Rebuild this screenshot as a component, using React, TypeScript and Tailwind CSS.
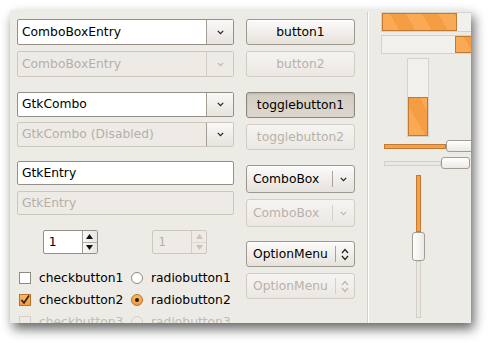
import React from "react";

const entryBox = "border border-[#958f86] rounded-[2px] bg-white";
const entryBoxOff = "border border-[#cdc7bf] rounded-[2px] bg-[#eeebe7]";
const btnOn =
  "border border-[#9d978e] rounded-[3px] bg-[linear-gradient(180deg,#fcfbfa,#e6e2dc)] shadow-[inset_0_1px_0_#ffffff]";
const btnOff =
  "border border-[#d2ccc4] rounded-[3px] bg-[linear-gradient(180deg,#f6f4f2,#ebe8e3)] text-[#b8b2aa]";

function Chevron({ dim = false }: { dim?: boolean }) {
  return (
    <svg width="7" height="5" viewBox="0 0 7 5">
      <path d="M0.8 0.8 L3.5 3.6 L6.2 0.8" fill="none" stroke={dim ? "#bdb7af" : "#222"} strokeWidth="1.2" />
    </svg>
  );
}

function UpDown({ dim = false }: { dim?: boolean }) {
  const c = dim ? "#bdb7af" : "#222";
  return (
    <svg width="8" height="13" viewBox="0 0 8 13">
      <path d="M1 5 L4 1.5 L7 5" fill="none" stroke={c} strokeWidth="1.2" />
      <path d="M1 8 L4 11.5 L7 8" fill="none" stroke={c} strokeWidth="1.2" />
    </svg>
  );
}

function ComboEntry({
  text,
  disabled = false,
  arrowDim,
  h = "h-[26px]",
}: {
  text: string;
  disabled?: boolean;
  arrowDim?: boolean;
  h?: string;
}) {
  const dim = arrowDim ?? disabled;
  return (
    <div className={`flex ${h} ${disabled ? entryBoxOff : entryBox}`}>
      <div className={`flex-1 flex items-center pl-[4px] ${disabled ? "text-[#b5afa7]" : "text-black"}`}>{text}</div>
      <div
        className={`w-[27px] flex items-center justify-center border-l ${
          dim
            ? "border-[#d3cdc5] bg-[#eeebe7]"
            : "border-[#a39d94] bg-[linear-gradient(180deg,#faf9f8,#e7e3de)]"
        }`}
      >
        <Chevron dim={dim} />
      </div>
    </div>
  );
}

function Spin({ disabled = false }: { disabled?: boolean }) {
  const c = disabled ? "#c9c3bb" : "#111";
  return (
    <div className={`flex w-[55px] h-[24px] ${disabled ? entryBoxOff : entryBox}`}>
      <div className={`flex-1 flex items-center pl-[5px] ${disabled ? "text-[#b5afa7]" : ""}`}>1</div>
      <div
        className={`w-[15px] flex flex-col border-l ${
          disabled ? "border-[#d3cdc5]" : "border-[#a39d94] bg-[linear-gradient(90deg,#fbfaf9,#e9e5e0)]"
        }`}
      >
        <div className="flex-1 flex items-center justify-center">
          <svg width="7" height="5" viewBox="0 0 7 5">
            <path d="M0 5 L3.5 0 L7 5 Z" fill={c} />
          </svg>
        </div>
        <div className={`h-px ${disabled ? "bg-[#ddd8d1]" : "bg-[#b5afa6]"}`} />
        <div className="flex-1 flex items-center justify-center">
          <svg width="7" height="5" viewBox="0 0 7 5">
            <path d="M0 0 L3.5 5 L7 0 Z" fill={c} />
          </svg>
        </div>
      </div>
    </div>
  );
}

function Check({ checked = false, disabled = false }: { checked?: boolean; disabled?: boolean }) {
  return (
    <div
      className={`w-[12px] h-[12px] border flex items-center justify-center ${
        checked
          ? "border-[#b7712b] bg-[linear-gradient(180deg,#fbb664,#f39b3f)]"
          : disabled
          ? "border-[#d6d0c8] bg-[#eeebe7]"
          : "border-[#8f897f] bg-white"
      }`}
    >
      {checked && (
        <svg width="10" height="10" viewBox="0 0 10 10">
          <path d="M1.5 5 L4 8 L9 0.5" fill="none" stroke="#2a1e12" strokeWidth="1.6" />
        </svg>
      )}
    </div>
  );
}

function Radio({ checked = false, disabled = false }: { checked?: boolean; disabled?: boolean }) {
  return (
    <div
      className={`w-[12px] h-[12px] rounded-full border flex items-center justify-center ${
        checked
          ? "border-[#b7712b] bg-[linear-gradient(180deg,#fbb664,#f39b3f)]"
          : disabled
          ? "border-[#d6d0c8] bg-[#eeebe7]"
          : "border-[#8f897f] bg-white"
      }`}
    >
      {checked && <div className="w-[4px] h-[4px] rounded-full bg-[#2a1e12]" />}
    </div>
  );
}

function Button({
  label,
  disabled = false,
  pressed = false,
  className = "",
}: {
  label: string;
  disabled?: boolean;
  pressed?: boolean;
  className?: string;
}) {
  const cls = disabled
    ? btnOff
    : pressed
    ? "border border-[#8c857c] rounded-[3px] bg-[linear-gradient(180deg,#d3ccc3,#ddd7cf)] shadow-[inset_0_1px_2px_rgba(0,0,0,0.12)]"
    : btnOn;
  return <div className={`h-[26px] shrink-0 flex items-center justify-center ${cls} ${className}`}>{label}</div>;
}

function MenuButton({
  label,
  disabled = false,
  updown = false,
  h,
}: {
  label: string;
  disabled?: boolean;
  updown?: boolean;
  h: string;
}) {
  return (
    <div className={`${h} flex items-center ${disabled ? btnOff : btnOn}`}>
      <div className="flex-1 pl-[6px]">{label}</div>
      <div className={`w-px h-[16px] ${disabled ? "bg-[#d6d0c8]" : "bg-[#a8a299]"}`} />
      <div className={`${updown ? "w-[18px]" : "w-[21px]"} flex justify-center`}>
        {updown ? <UpDown dim={disabled} /> : <Chevron dim={disabled} />}
      </div>
    </div>
  );
}

const orange =
  "border border-[#c27a33] bg-[repeating-linear-gradient(60deg,#faaa55_0px,#faaa55_14px,#f49d43_14px,#f49d43_28px)]";
const slider =
  "border border-[#a29c93] rounded-[3px] bg-[linear-gradient(180deg,#ffffff,#ece9e5)]";

export default function App() {
  return (
    <div className="min-h-screen bg-white pl-[10px] pt-[10px] font-['DejaVu_Sans',sans-serif] text-[12.3px] text-black leading-none">
      <div className="w-[461px] h-[313px] overflow-hidden bg-[#edebe6] rounded-tl-[2px] shadow-[3px_6px_12px_rgba(0,0,0,0.6)] flex items-start">
        {/* left column */}
        <div className="w-[217px] ml-[7px] mt-[9px] flex flex-col shrink-0">
          <ComboEntry text="ComboBoxEntry" />
          <div className="mt-[6px]">
            <ComboEntry text="ComboBoxEntry" disabled />
          </div>
          <div className="mt-[15px]">
            <ComboEntry text="GtkCombo" h="h-[25px]" />
          </div>
          <div className="mt-[5px]">
            <ComboEntry text="GtkCombo (Disabled)" disabled arrowDim={false} h="h-[25px]" />
          </div>
          <div className={`mt-[14px] h-[24px] flex items-center pl-[4px] ${entryBox}`}>GtkEntry</div>
          <div className={`mt-[6px] h-[24px] flex items-center pl-[4px] text-[#b5afa7] ${entryBoxOff}`}>GtkEntry</div>
          <div className="mt-[15px] grid grid-cols-2">
            <div className="flex justify-center pr-[2px]">
              <Spin />
            </div>
            <div className="flex justify-center">
              <Spin disabled />
            </div>
          </div>
          <div className="mt-[18px] grid grid-cols-[112px_1fr] gap-y-[10px] pl-[2px]">
            <div className="flex items-center gap-[8px] h-[12px]">
              <Check />
              <span>checkbutton1</span>
            </div>
            <div className="flex items-center gap-[8px] h-[12px]">
              <Radio />
              <span>radiobutton1</span>
            </div>
            <div className="flex items-center gap-[8px] h-[12px]">
              <Check checked />
              <span>checkbutton2</span>
            </div>
            <div className="flex items-center gap-[8px] h-[12px]">
              <Radio checked />
              <span>radiobutton2</span>
            </div>
            <div className="flex items-center gap-[8px] h-[12px] text-[#c2bcb4]">
              <Check disabled />
              <span>checkbutton3</span>
            </div>
            <div className="flex items-center gap-[8px] h-[12px] text-[#c2bcb4]">
              <Radio disabled />
              <span>radiobutton3</span>
            </div>
          </div>
        </div>

        {/* middle column */}
        <div className="w-[109px] ml-[12px] mt-[9px] flex flex-col shrink-0">
          <Button label="button1" />
          <Button label="button2" disabled className="mt-[6px]" />
          <Button label="togglebutton1" pressed className="mt-[15px]" />
          <Button label="togglebutton2" disabled className="mt-[6px]" />
          <div className="mt-[15px]">
            <MenuButton label="ComboBox" h="h-[28px]" />
          </div>
          <div className="mt-[6px]">
            <MenuButton label="ComboBox" disabled h="h-[28px]" />
          </div>
          <div className="mt-[14px]">
            <MenuButton label="OptionMenu" updown h="h-[26px]" />
          </div>
          <div className="mt-[6px]">
            <MenuButton label="OptionMenu" updown disabled h="h-[26px]" />
          </div>
        </div>

        {/* separator */}
        <div className="ml-[12px] mt-[2px] h-[311px] flex shrink-0">
          <div className="w-px bg-[#d3cec6]" />
          <div className="w-px bg-white" />
        </div>

        {/* right column */}
        <div className="ml-[12px] w-[100px] shrink-0 flex flex-col">
          <div className="mt-[2px] h-[20px] w-[100px] border border-[#d6d1ca] bg-[#f2f0ed] flex">
            <div className={`w-[75px] ${orange}`} />
          </div>
          <div className="mt-[3px] h-[19px] w-[100px] border border-[#d6d1ca] bg-[#f2f0ed] flex justify-end">
            <div className={`w-[25px] ${orange}`} />
          </div>
          <div className="mt-[4px] ml-[26px] h-[79px] w-[22px] border border-[#d6d1ca] bg-[#f2f0ed] flex flex-col justify-end">
            <div className={`h-[39px] ${orange}`} />
          </div>
          <div className="mt-[3px] ml-[3px] h-[12px] flex items-center">
            <div className="w-[62px] h-[5px] border border-[#c27a33] bg-[#f6a04a]" />
            <div className={`w-[34px] h-[12px] ${slider}`} />
          </div>
          <div className="mt-[5px] ml-[3px] h-[12px] flex items-center">
            <div className="w-[57px] h-[5px] border border-[#d3cec6] bg-[#ebe8e3]" />
            <div className={`w-[29px] h-[12px] ${slider}`} />
          </div>
          <div className="mt-[6px] ml-[31px] w-[13px] flex flex-col items-center">
            <div className="w-[5px] h-[57px] border border-[#c27a33] bg-[#f6a04a]" />
            <div className="w-[13px] h-[29px] border border-[#a29c93] rounded-[3px] bg-[linear-gradient(90deg,#ffffff,#ece9e5)]" />
            <div className="w-[5px] h-[57px] border border-[#d3cec6] bg-[#ebe8e3]" />
          </div>
        </div>
      </div>
    </div>
  );
}
